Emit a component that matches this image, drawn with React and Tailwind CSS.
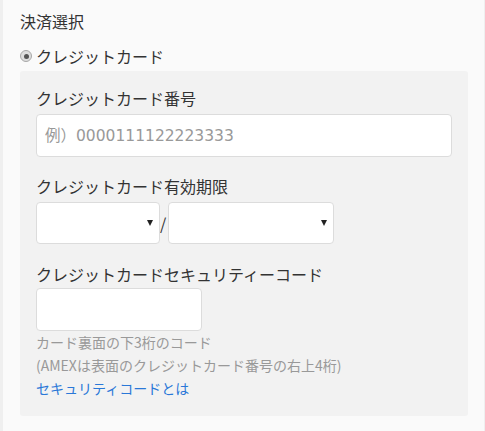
import React from "react";

const jp = { fontFamily: '"Noto Sans CJK JP", "Noto Sans", sans-serif' };

const Label = ({ children, className = "" }) => (
  <p className={`text-[16px] leading-6 text-[#333] ${className}`}>{children}</p>
);

const Select = ({ className = "" }) => (
  <div className={`relative h-[42px] ${className}`}>
    <select className="w-full h-full appearance-none rounded-[4px] border border-[#dcdcdc] bg-white px-2 text-[16px] text-[#333] outline-none">
      <option value=""></option>
    </select>
    <span className="pointer-events-none absolute right-[7px] top-1/2 -translate-y-1/2 border-l-[3px] border-r-[3px] border-t-[6px] border-l-transparent border-r-transparent border-t-[#222]" />
  </div>
);

const App = () => {
  return (
    <div className="min-h-[431px] bg-[#efefef] pl-[3px] pr-px" style={jp}>
      <div className="min-h-[431px] bg-[#fafafa] pl-[17px] pr-4 pt-[9px]">
        <h2 className="text-[16px] leading-6 font-normal text-[#333]">決済選択</h2>

        <label className="mt-[11px] flex items-center h-6">
          <span className="flex items-center justify-center w-3 h-3 rounded-full border border-[#a8a8a8] bg-[#dedede]">
            <span className="w-[5px] h-[5px] rounded-full bg-[#555]" />
          </span>
          <span className="ml-[4px] text-[16px] leading-6 text-[#333]">クレジットカード</span>
        </label>

        <div className="mt-[3px] rounded-[3px] bg-[#f2f2f2] px-4 pt-[15px] pb-4">
          <Label>クレジットカード番号</Label>
          <input
            type="text"
            placeholder="例）0000111122223333"
            className="mt-1 block w-full h-[43px] rounded-[4px] border border-[#dcdcdc] bg-white px-2 text-[15.5px] text-[#333] outline-none placeholder:text-[#999]"
            style={{ fontFamily: '"DejaVu Sans", "Noto Sans CJK JP", sans-serif' }}
          />

          <Label className="mt-[17px]">クレジットカード有効期限</Label>
          <div className="mt-1 flex items-center">
            <Select className="w-[124px]" />
            <span className="w-2 text-[16px] leading-6 text-[#333]">/</span>
            <Select className="w-[166px]" />
          </div>

          <Label className="mt-[18px]">クレジットカードセキュリティーコード</Label>
          <input
            type="text"
            className="mt-[2px] block w-[166px] h-[43px] rounded-[4px] border border-[#dcdcdc] bg-white px-2 text-[16px] outline-none"
          />

          <div className="text-[14px] leading-[23px]">
            <p className="text-[#999]">カード裏面の下3桁のコード</p>
            <p className="text-[#999]">(AMEXは表面のクレジットカード番号の右上4桁)</p>
            <a href="#" className="text-[#2a78d8]">セキュリティコードとは</a>
          </div>
        </div>
      </div>
    </div>
  );
};

export default App;
